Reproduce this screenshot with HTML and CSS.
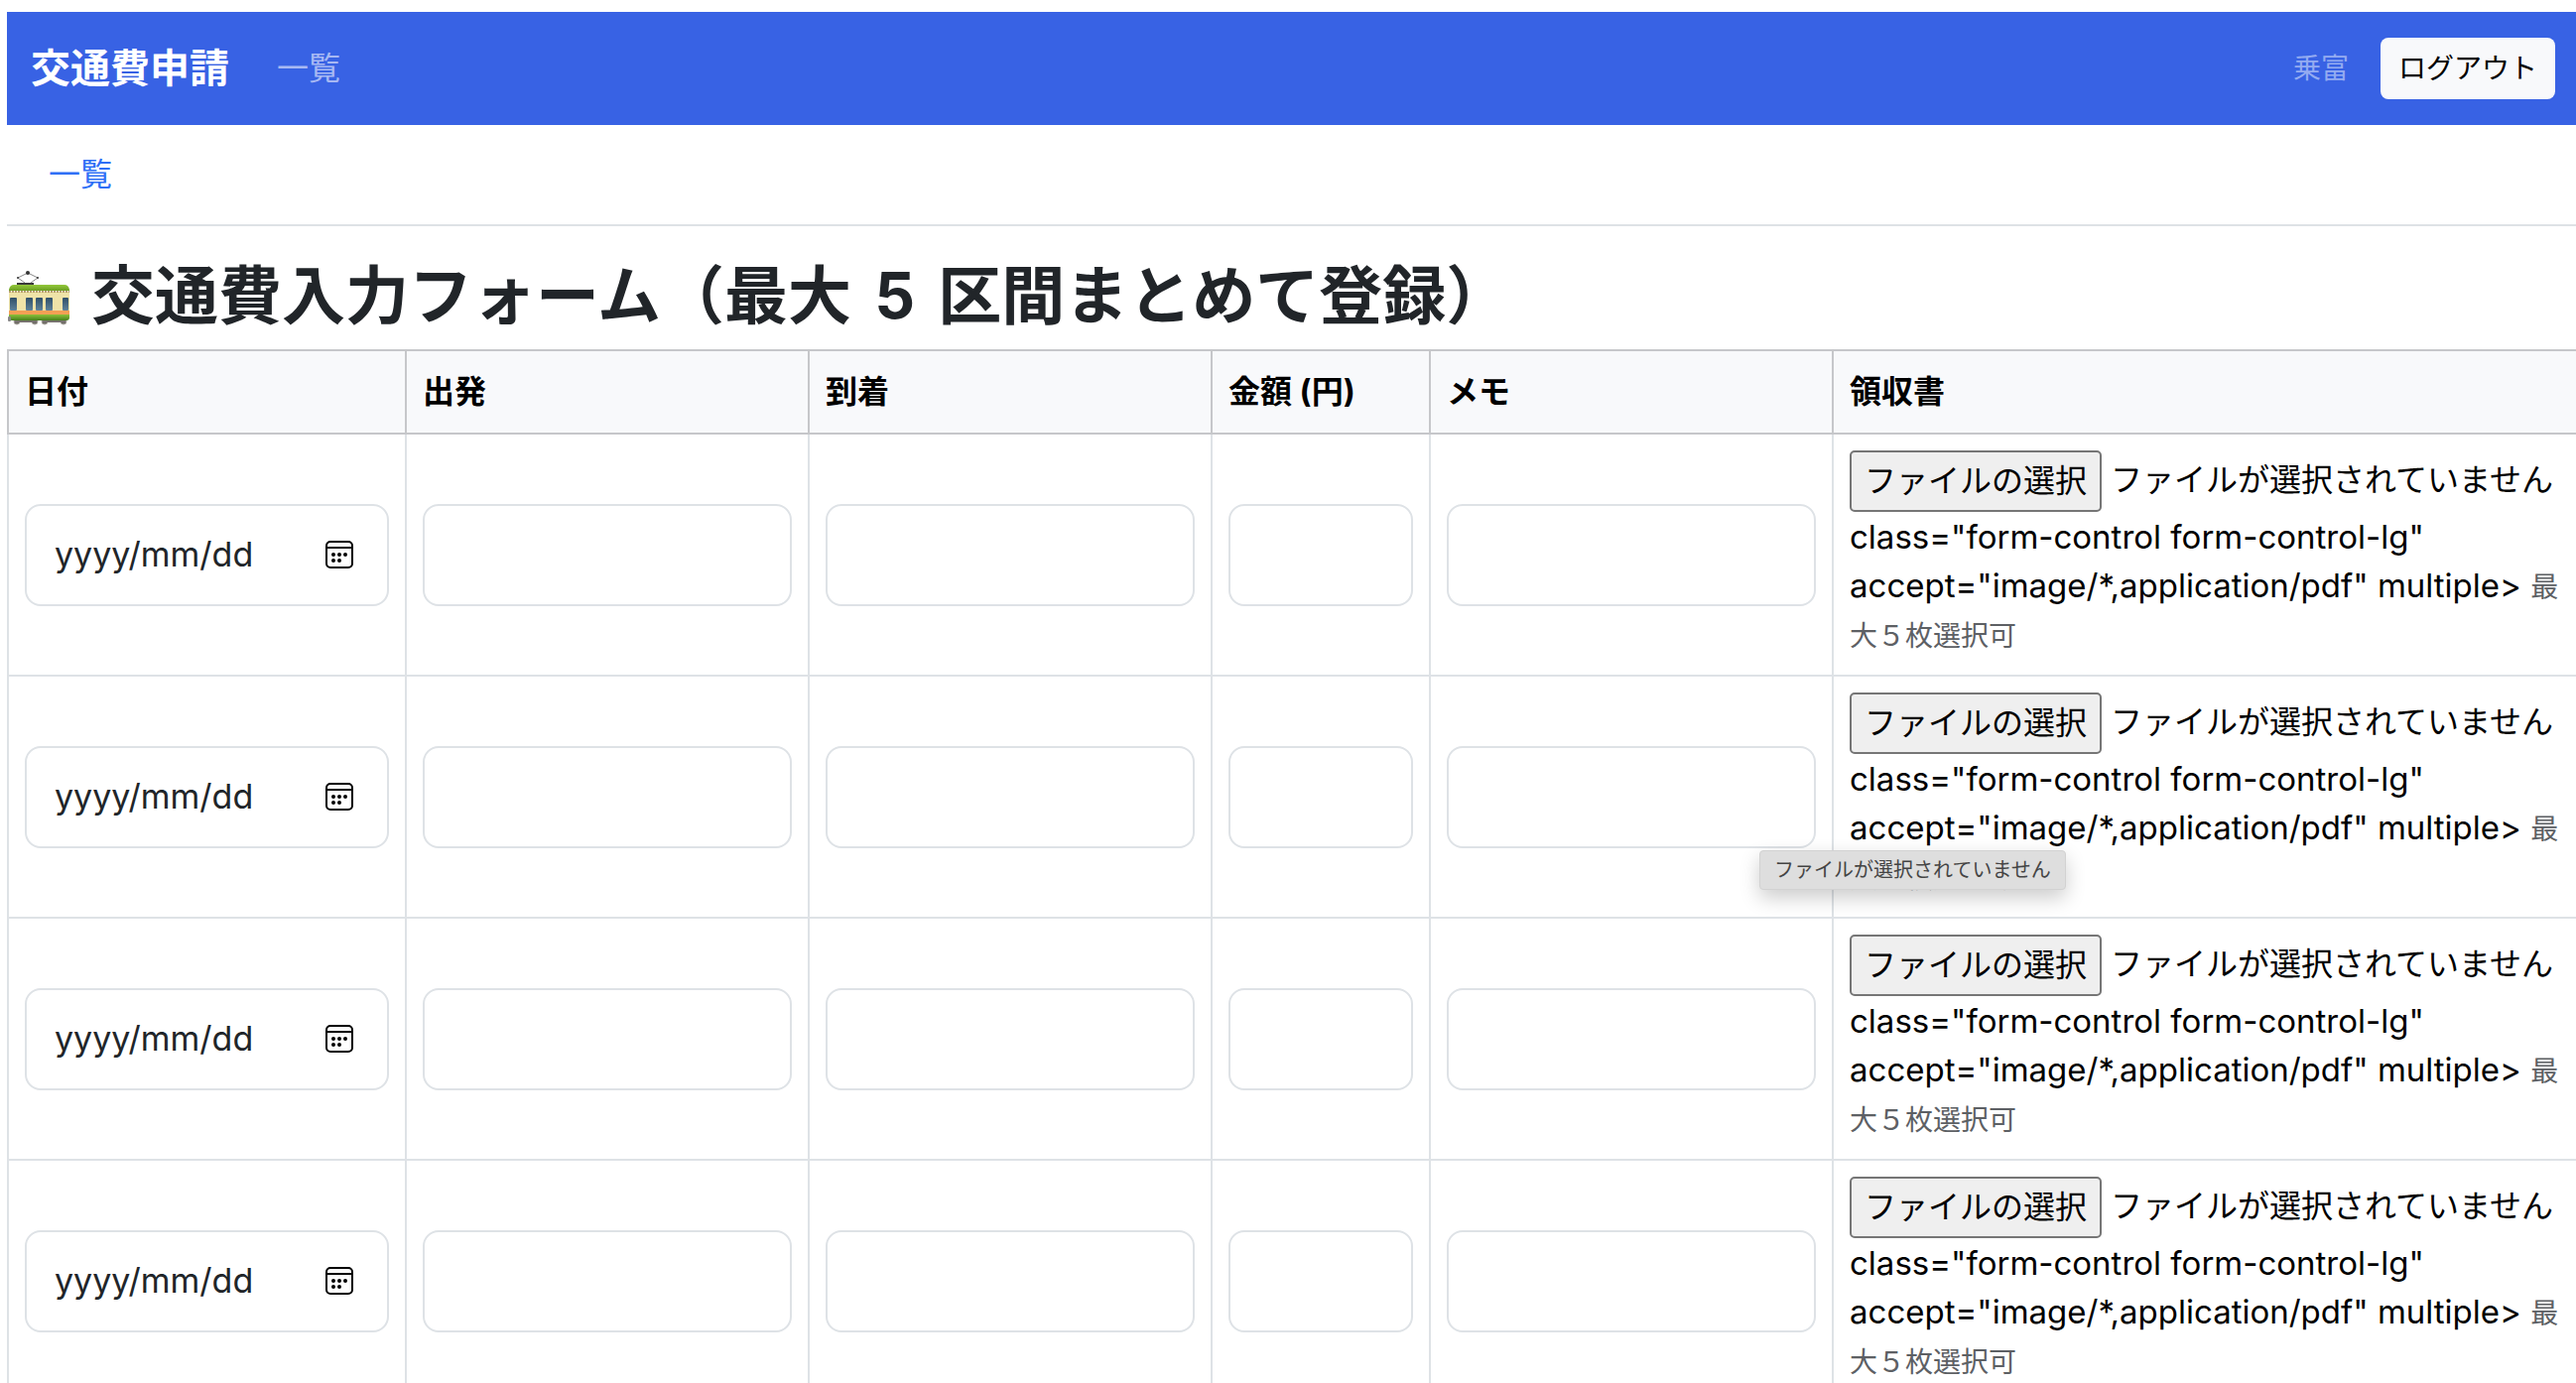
FILE: index.html
```html
<!DOCTYPE html>
<html lang="ja">
<head>
<meta charset="utf-8">
<title>交通費申請</title>
<link rel="stylesheet" href="styles.css">
</head>
<body>
<header class="navbar">
  <a class="brand" href="#">交通費申請</a>
  <a class="nav-link" href="#">一覧</a>
  <span class="user">乗富</span>
  <button class="logout" type="button">ログアウト</button>
</header>
<nav class="subnav"><a href="#">一覧</a></nav>
<main>
  <h1 class="title">
    <svg class="tram" viewBox="0 0 64 64" aria-hidden="true">
      <defs>
        <linearGradient id="glass" x2="0" y2="1"><stop offset="0" stop-color="#2f4f68"/><stop offset="1" stop-color="#5f8299"/></linearGradient>
        <linearGradient id="roof" x2="0" y2="1"><stop offset="0" stop-color="#93c83a"/><stop offset="1" stop-color="#6a9f22"/></linearGradient>
        <linearGradient id="skirt" x2="0" y2="1"><stop offset="0" stop-color="#8dc13a"/><stop offset="1" stop-color="#467f1c"/></linearGradient>
      </defs>
      <path d="M18 19L11 14L21 9L31 14L24 19" fill="none" stroke="#888" stroke-width="1"/>
      <g fill="#333"><circle cx="11" cy="14" r="1"/><circle cx="31" cy="14" r="1"/><circle cx="21" cy="9" r="2"/></g>
      <rect x="10" y="19" width="17" height="3" fill="#3a3a3a"/>
      <g fill="#6e6a66" stroke="#aaa69f" stroke-width="1">
        <circle cx="10" cy="58" r="3"/><circle cx="28" cy="58" r="3"/><circle cx="38" cy="58" r="3"/><circle cx="57" cy="58" r="3"/>
      </g>
      <path d="M8 56h22v3H8zM36 56h23v3H36z" fill="#77736e"/>
      <path d="M2 28h61v20H2z" fill="#efe3a8"/>
      <path d="M2 26q1-5 5-5h51q4 0 5 5v1H2z" fill="url(#roof)"/>
      <path d="M2 28h61" stroke="#b89f70" stroke-width="2" stroke-dasharray="2 1"/>
      <g fill="url(#glass)">
        <rect x="3" y="34" width="7" height="13" rx="1"/><rect x="19" y="34" width="7" height="13" rx="1"/><rect x="29" y="34" width="7" height="13" rx="1"/><rect x="39" y="34" width="7" height="13" rx="1"/><rect x="56" y="34" width="6" height="13" rx="1"/>
      </g>
      <rect x="2" y="47" width="61" height="5" fill="#f2a055"/>
      <path d="M2 51h61v3q0 3-3 3H5q-3 0-3-3z" fill="url(#skirt)"/>
      <rect x="1" y="53" width="3" height="5" rx="1" fill="#888"/>
    </svg>
    <span>交通費入力フォーム（最大 <span class="count">5</span> 区間まとめて登録）</span>
  </h1>
  <table class="fares">
    <colgroup><col class="c-date"><col class="c-place"><col class="c-place"><col class="c-fee"><col class="c-place"><col></colgroup>
    <thead>
      <tr><th>日付</th><th>出発</th><th>到着</th><th>金額 (円)</th><th>メモ</th><th>領収書</th></tr>
    </thead>
    <tbody id="rows"></tbody>
  </table>
</main>
<template id="row">
  <tr>
    <td><div class="control date"><input type="text" placeholder="yyyy/mm/dd" aria-label="日付"><button type="button" aria-label="カレンダー"><svg viewBox="0 0 28 28"><rect x="1" y="1" width="26" height="26" rx="4" fill="none" stroke="#000" stroke-width="2"/><path d="M1 7h26" stroke="#000" stroke-width="2"/><g fill="#000"><circle cx="8" cy="14" r="2"/><circle cx="14" cy="14" r="2"/><circle cx="20" cy="14" r="2"/><circle cx="8" cy="20" r="2"/><circle cx="14" cy="20" r="2"/></g></svg></button></div></td>
    <td><input class="control" type="text" aria-label="出発"></td>
    <td><input class="control" type="text" aria-label="到着"></td>
    <td><input class="control" type="text" aria-label="金額 (円)"></td>
    <td><input class="control" type="text" aria-label="メモ"></td>
    <td class="receipt"><div class="file"><button type="button">ファイルの選択</button><span>ファイルが選択されていません</span></div><div class="note">class="form-control form-control-lg" accept="image/*,application/pdf" multiple&gt; <small>最大５枚選択可</small></div></td>
  </tr>
</template>
<script src="rows.js"></script>
</body>
</html>
```
FILE: styles.css
```css
* { box-sizing: border-box; }
body {
  margin: 12px 0 0 7px;
  overflow: hidden;
  background: #fff;
  color: #212529;
  font: 32px/50px Inter, "Noto Sans CJK JP", sans-serif;
}
button, input { font: inherit; color: inherit; }
a { text-decoration: none; }
.navbar {
  display: flex;
  align-items: center;
  height: 114px;
  padding: 0 21px 0 24px;
  background: #3862e4;
}
.brand { color: #fff; font-size: 40px; font-weight: 700; }
.nav-link { margin-left: 48px; color: #a7b8f3; }
.user { margin-left: auto; font-size: 28px; color: #94abf1; }
.logout {
  margin-left: 32px;
  height: 62px;
  padding: 0 18px;
  border: 0;
  border-radius: 8px;
  background: #f8f9fb;
  color: #000;
  font-size: 28px;
  line-height: 60px;
}
.subnav { padding: 25px 42px; border-bottom: 2px solid #dee2e6; }
.subnav a { color: #2f6ff6; }
.title {
  display: flex;
  align-items: center;
  gap: 21px;
  height: 124px;
  margin: 0;
  padding-top: 16px;
  font-size: 64px;
  line-height: 76px;
  font-weight: 700;
  white-space: nowrap;
}
.tram { width: 64px; height: 64px; flex: none; }
.count { margin: 0 8px; }
.fares {
  width: 100%;
  table-layout: fixed;
  border-collapse: collapse;
  color: #000;
}
.c-date { width: 401px; }
.c-place { width: 406px; }
.c-fee { width: 220px; }
th, td { padding: 16px; border: 2px solid #dee2e6; text-align: left; vertical-align: middle; }
th { border-color: #c6c7ca; background: #f8f9fb; font-weight: 700; }
th:last-child, td:last-child { border-right: 0; }
.control {
  display: block;
  width: 100%;
  height: 103px;
  padding: 0 28px;
  border: 2px solid #dee2e6;
  border-radius: 16px;
  background: #fff;
  color: #212529;
  font-size: 34px;
}
.date { display: flex; align-items: center; padding-right: 34px; }
.date input { flex: 1; min-width: 0; padding: 0; border: 0; outline: 0; background: none; }
.date input::placeholder { color: #212529; opacity: 1; }
.date button { display: flex; padding: 0; border: 0; background: none; }
.date svg { width: 28px; height: 28px; }
.receipt { position: relative; }
.file { display: flex; align-items: flex-start; gap: 9px; height: 63px; line-height: 60px; white-space: nowrap; }
.file button {
  height: 62px;
  padding: 0 13px;
  border: 2px solid #767676;
  border-radius: 5px;
  background: #efefef;
  color: #000;
  line-height: 56px;
}
.note { font-size: 33px; line-height: 49px; }
small { font-size: 28px; line-height: 28px; color: #5d6064; }
.tooltip {
  position: absolute;
  top: 175px;
  left: -75px;
  padding: 0 14px;
  border: 1px solid #d2d2d2;
  border-radius: 4px;
  background: #dedede;
  box-shadow: 0 8px 20px rgba(0, 0, 0, .2);
  color: #444;
  font-size: 20px;
  line-height: 38px;
  white-space: nowrap;
}
```
FILE: rows.js
```js
const template = document.getElementById('row');
const rows = document.getElementById('rows');
for (let i = 0; i < 4; i++) {
  rows.append(template.content.cloneNode(true));
}
const tip = document.createElement('div');
tip.className = 'tooltip';
tip.setAttribute('role', 'tooltip');
tip.textContent = 'ファイルが選択されていません';
rows.rows[1].querySelector('.receipt').append(tip);
```
